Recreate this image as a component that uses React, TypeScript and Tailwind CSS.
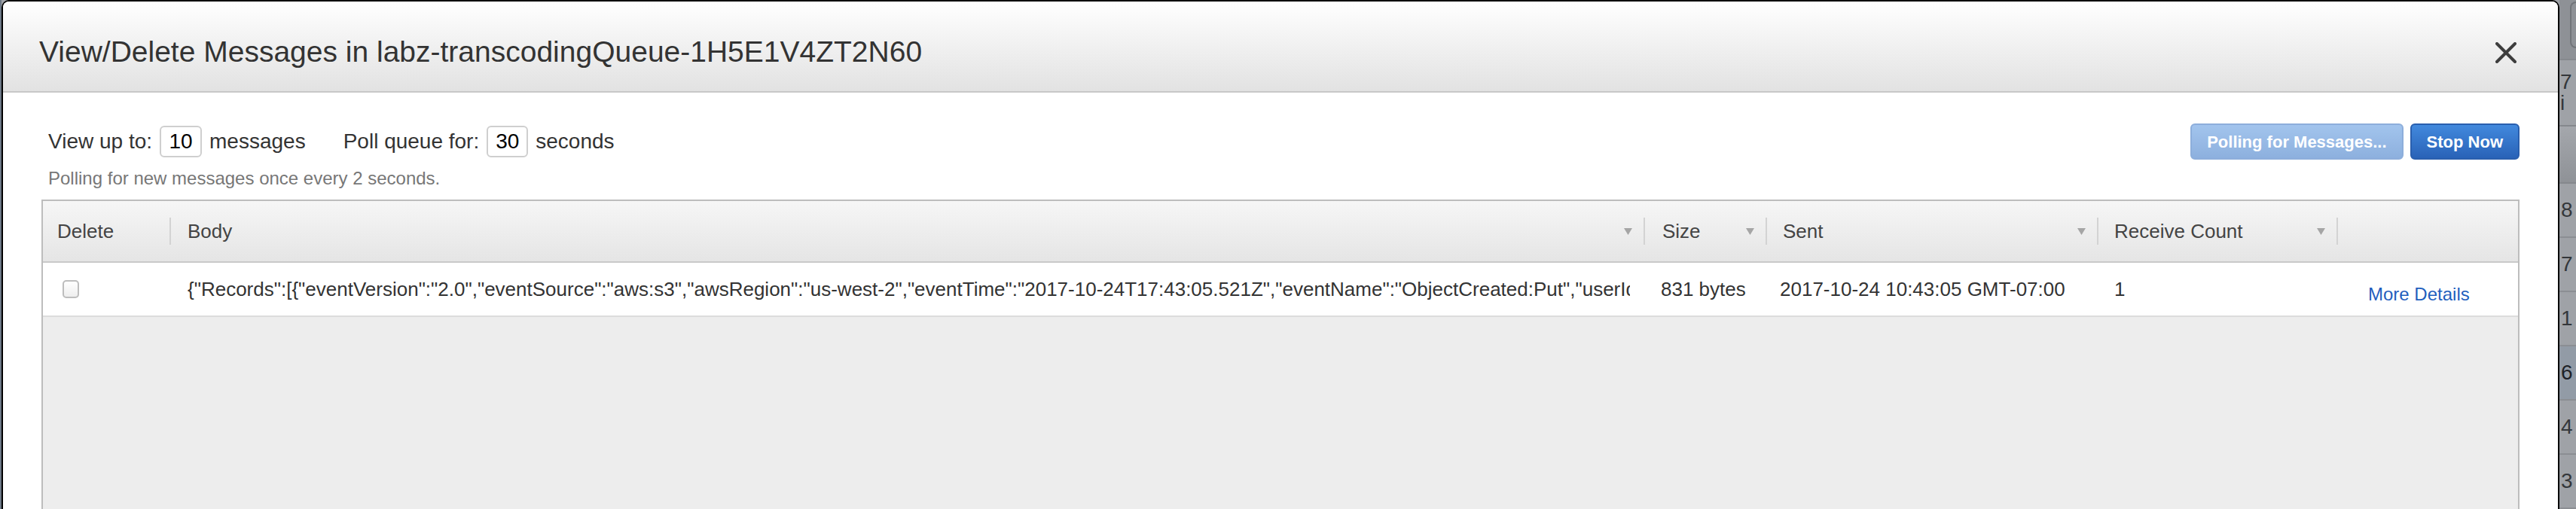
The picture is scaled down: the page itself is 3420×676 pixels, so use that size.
import React from 'react'

const FONT = { fontFamily: '"Liberation Sans", Arial, Helvetica, sans-serif' }

const BODY =
  '{"Records":[{"eventVersion":"2.0","eventSource":"aws:s3","awsRegion":"us-west-2","eventTime":"2017-10-24T17:43:05.521Z","eventName":"ObjectCreated:Put","userIdentity"'

const columns = [
  { label: 'Delete', width: 'w-[170px]', pad: 'pl-[19px]', sort: false },
  { label: 'Body', width: 'w-[1957px]', pad: 'pl-[22px]', sort: true },
  { label: 'Size', width: 'w-[162px]', pad: 'pl-[23px]', sort: true },
  { label: 'Sent', width: 'w-[440px]', pad: 'pl-[21px]', sort: true },
  { label: 'Receive Count', width: 'w-[318px]', pad: 'pl-[21px]', sort: true },
]

function SortArrow() {
  return (
    <svg width="11" height="9" viewBox="0 0 11 9" className="mr-[15px] shrink-0">
      <polygon points="0,0 11,0 5.5,9" fill="#a5a5a5" />
    </svg>
  )
}

function CloseIcon() {
  return (
    <svg width="28" height="28" viewBox="0 0 28 28">
      <path d="M2 2 L26 26 M26 2 L2 26" stroke="#3d3d3d" strokeWidth="4" strokeLinecap="round" />
    </svg>
  )
}

// the dimmed page that peeks out on the right of the dialog
function BackdropStrip() {
  const rows = ['8', '7', '1', '6', '4', '3']
  return (
    <div className="flex w-[22px] shrink-0 flex-col bg-[#9fa2a7] text-[28px] leading-none text-[#34373b]">
      <div className="h-[86px] border-b-2 border-[#85888d] bg-[#8e9196] pl-[14px] pt-[2px]">
        <div className="h-[62px] rounded-l-[8px] border-2 border-r-0 border-[#72757a]" />
      </div>
      <div className="flex h-[92px] items-center pl-[1px]">7 i</div>
      <div className="h-[84px] border-y-2 border-[#85888d] bg-gradient-to-b from-[#a4a7ac] to-[#8f9297]" />
      {rows.map((r, i) => (
        <div
          key={i}
          className={`flex h-[72px] shrink-0 items-center border-b-2 border-[#8b8e93] pl-[2px] ${
            r === '6' ? 'bg-[#929ba6] text-[#1e2228]' : ''
          }`}
        >
          {r}
        </div>
      ))}
    </div>
  )
}

export default function App() {
  return (
    <div className="flex h-[676px] w-[3420px] overflow-hidden bg-[#9fa2a7]" style={FONT}>
      <div className="w-[2px] shrink-0 bg-[#6d7886]" />

      <div className="flex w-[3396px] shrink-0 flex-col rounded-t-[10px] border-2 border-b-0 border-black bg-white">
        {/* header */}
        <div className="flex h-[121px] shrink-0 items-start justify-between rounded-t-[8px] border-b-2 border-[#c8c8c8] bg-gradient-to-b from-white to-[#e2e2e2] pl-[48px] pr-[55px]">
          <h1 className="pt-[45px] text-[39px] leading-[44px] text-[#333]">
            View/Delete Messages in labz-transcodingQueue-1H5E1V4ZT2N60
          </h1>
          <div className="pt-[54px]">
            <CloseIcon />
          </div>
        </div>

        {/* body */}
        <div className="flex min-h-0 flex-1 flex-col px-[51px] pt-[41px]">
          <div className="flex items-start justify-between">
            <div className="pl-[9px]">
              <div className="flex h-[48px] items-center text-[28px] leading-[32px] text-[#333]">
                <span>View up to:</span>
                <span className="mx-[10px] flex h-[42px] w-[56px] items-center justify-center rounded-[6px] border-2 border-[#cfcfcf] text-black">
                  10
                </span>
                <span>messages</span>
                <span className="ml-[50px]">Poll queue for:</span>
                <span className="mx-[10px] flex h-[42px] w-[55px] items-center justify-center rounded-[6px] border-2 border-[#cfcfcf] text-black">
                  30
                </span>
                <span>seconds</span>
              </div>
              <div className="mt-[11px] text-[24px] leading-[28px] text-[#777]">
                Polling for new messages once every 2 seconds.
              </div>
            </div>
            <div className="flex gap-[9px]">
              <button className="h-[48px] rounded-[6px] border-2 border-[#8daedb] bg-gradient-to-b from-[#a2c4ed] to-[#8db0de] px-[20px] text-[22px] font-bold text-white">
                Polling for Messages...
              </button>
              <button className="h-[48px] rounded-[6px] border-2 border-[#2a5fae] bg-gradient-to-b from-[#4289dd] to-[#2962b7] px-[20px] text-[22px] font-bold text-white">
                Stop Now
              </button>
            </div>
          </div>

          {/* messages table */}
          <div className="mt-[14px] flex min-h-0 flex-1 flex-col border-2 border-b-0 border-[#bdbdbd] bg-[#ededed] text-[26px] leading-[30px]">
            <div className="flex h-[82px] shrink-0 items-center border-b-2 border-[#c9c9c9] bg-gradient-to-b from-[#f6f6f6] to-[#e5e5e5] text-[#444]">
              {columns.map((c) => (
                <div key={c.label} className={`flex h-full shrink-0 items-center ${c.width}`}>
                  <span className={c.pad}>{c.label}</span>
                  <span className="flex-1" />
                  {c.sort && <SortArrow />}
                  <span className="h-[36px] w-[2px] bg-[#d3d3d3]" />
                </div>
              ))}
              <div className="flex-1" />
            </div>

            <div className="flex h-[72px] shrink-0 items-center border-b-2 border-[#dcdcdc] bg-white text-[#333]">
              <div className="flex w-[170px] shrink-0 items-center pl-[26px]">
                <span className="h-[24px] w-[22px] rounded-[5px] border-2 border-[#bdbdbd] bg-gradient-to-b from-white to-[#eeeeee]" />
              </div>
              <div className="w-[1957px] shrink-0 overflow-hidden whitespace-nowrap pl-[22px] pr-[20px]">
                <div className="overflow-hidden">{BODY}</div>
              </div>
              <div className="w-[162px] shrink-0 whitespace-nowrap pl-[21px]">831 bytes</div>
              <div className="w-[440px] shrink-0 whitespace-nowrap pl-[17px]">2017-10-24 10:43:05 GMT-07:00</div>
              <div className="w-[318px] shrink-0 pl-[21px]">1</div>
              <div className="flex-1 pl-[40px] pt-[14px] text-[24px] text-[#1f5fbe]">More Details</div>
            </div>
          </div>
        </div>
      </div>

      <BackdropStrip />
    </div>
  )
}
